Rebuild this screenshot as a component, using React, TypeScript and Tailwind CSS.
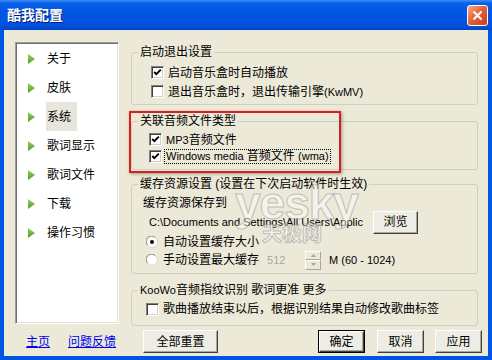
import React from "react";

const FONT = "font-['Liberation_Sans','Noto_Sans_CJK_SC',sans-serif]";

const menuItems = ["关于", "皮肤", "系统", "歌词显示", "歌词文件", "下载", "操作习惯"];

function CheckBox({ checked }: { checked?: boolean }) {
  return (
    <span className="relative inline-block h-[13px] w-[13px] shrink-0 border border-t-[#808080] border-l-[#808080] border-r-white border-b-white bg-white shadow-[inset_1px_1px_0_#404040,inset_-1px_-1px_0_#d4d0c8]">
      {checked && (
        <svg viewBox="0 0 11 11" className="absolute inset-0 h-[11px] w-[11px]">
          <path d="M2.2 5 L4.3 7.2 L8.8 2.6" fill="none" stroke="#000" strokeWidth="1.9" />
        </svg>
      )}
    </span>
  );
}

function Radio({ checked }: { checked?: boolean }) {
  return (
    <svg width="12" height="12" viewBox="0 0 12 12" className="shrink-0">
      <circle cx="6" cy="6" r="5.5" fill="#fff" stroke="#d8d6cc" />
      <path d="M1.6 9 A5 5 0 0 1 9 1.6" fill="none" stroke="#8e8c84" strokeWidth="1" />
      {checked && <circle cx="6" cy="6" r="2" fill="#000" />}
    </svg>
  );
}

function WinButton({ children, isDefault, className = "" }: { children: React.ReactNode; isDefault?: boolean; className?: string }) {
  return (
    <div className={`h-[23px] shrink-0 ${isDefault ? "border border-black" : ""} ${className}`}>
      <div className="flex h-full w-full items-center justify-center border border-t-white border-l-white border-r-[#404040] border-b-[#404040] bg-[#eeede5] text-[12px] shadow-[inset_-1px_-1px_0_#aca899]">
        {children}
      </div>
    </div>
  );
}

function GroupBox({ title, className = "", children }: { title: React.ReactNode; className?: string; children: React.ReactNode }) {
  return (
    <fieldset className={`w-[347px] rounded-[3px] border border-[#d0d0bf] ${className}`}>
      <legend className="ml-[6px] px-[2px] text-[12px] leading-[14px]">{title}</legend>
      {children}
    </fieldset>
  );
}

function Arrow({ up }: { up?: boolean }) {
  return (
    <svg width="5" height="3" viewBox="0 0 5 3">
      <path d={up ? "M0 3 L2.5 0 L5 3 Z" : "M0 0 L2.5 3 L5 0 Z"} fill="#aca899" />
    </svg>
  );
}

export default function App() {
  return (
    <div className={`flex h-[360px] w-[492px] flex-col bg-[#0054e3] text-black ${FONT}`}>
      {/* title bar */}
      <div className="flex h-[30px] shrink-0 items-start bg-[linear-gradient(to_bottom,#3d8ef6_0%,#0a61e9_10%,#0055e3_45%,#0052de_85%,#0045c2_100%)]">
        <span className="mt-[6px] pl-[7px] text-[14px] font-bold leading-[18px] text-white [text-shadow:1px_1px_0_#0a1e6e]">酷我配置</span>
        <div className="ml-auto mr-[4px] mt-[5px] flex h-[21px] w-[21px] items-center justify-center rounded-[3px] border border-white bg-[linear-gradient(135deg,#f4ab8c_0%,#e2643e_45%,#c43f1c_100%)]">
          <svg width="11" height="11" viewBox="0 0 11 11">
            <path d="M1.5 1.5 L9.5 9.5 M9.5 1.5 L1.5 9.5" stroke="#fff" strokeWidth="2" />
          </svg>
        </div>
      </div>

      {/* body */}
      <div className="relative mx-[4px] mb-[4px] flex-1 bg-[#ece9d8]">
        <div className="flex items-start pl-[11px] pt-[12px]">
          {/* left menu */}
          <div className="h-[282px] w-[104px] shrink-0 border border-t-[#9d9d9d] border-l-[#9d9d9d] border-r-white border-b-white bg-white p-px shadow-[inset_1px_1px_0_#6e6e6e,inset_-1px_-1px_0_#e4e2d8]">
            {menuItems.map((item, i) => (
              <div key={item} className="flex h-[29px] items-center">
                <svg width="7" height="10" viewBox="0 0 7 10" className="ml-[11px] shrink-0">
                  <defs>
                    <linearGradient id={`tri${i}`} x1="0" y1="0" x2="0" y2="1">
                      <stop offset="0" stopColor="#9ad068" />
                      <stop offset="1" stopColor="#4f9c22" />
                    </linearGradient>
                  </defs>
                  <path d="M0 0 L7 5 L0 10 Z" fill={`url(#tri${i})`} />
                </svg>
                <span className={`ml-[11px] flex h-full items-center pl-px pr-[6px] text-[12px] ${i === 2 ? "bg-[#e8e6dc]" : ""}`}>{item}</span>
              </div>
            ))}
          </div>

          {/* right groups */}
          <div className="ml-[12px] mt-[3px] flex flex-col">
            <GroupBox title="启动退出设置">
              <div className="pb-[3px] pl-[19px] pt-[4px] text-[12px]">
                <div className="flex h-[19px] items-center gap-[4px]">
                  <CheckBox checked />
                  <span>启动音乐盒时自动播放</span>
                </div>
                <div className="flex h-[19px] items-center gap-[4px]">
                  <CheckBox />
                  <span>
                    退出音乐盒时，退出传输引擎<span className="text-[11px]">(KwMV)</span>
                  </span>
                </div>
              </div>
            </GroupBox>

            <GroupBox title="关联音频文件类型" className="mt-[9px]">
              <div className="pb-[4px] pl-[17px] pt-[3px] text-[12px]">
                <div className="flex h-[17px] items-center gap-[2px]">
                  <CheckBox checked />
                  <span className="border border-transparent px-px">
                    <span className="text-[11px]">MP3</span>音频文件
                  </span>
                </div>
                <div className="flex h-[17px] items-center gap-[2px]">
                  <CheckBox checked />
                  <span className="border border-dotted border-black px-px leading-[13px]">
                    <span className="text-[11px]">Windows media </span>音频文件 <span className="text-[11px]">(wma)</span>
                  </span>
                </div>
              </div>
            </GroupBox>

            <GroupBox title="缓存资源设置 (设置在下次启动软件时生效)" className="mt-[7px]">
              <div className="pb-[3px] pl-[11px] pt-[4px] text-[12px]">
                <div className="flex h-[16px] items-center">缓存资源保存到</div>
                <div className="flex h-[22px] items-center">
                  <span className="ml-[6px] w-[212px] whitespace-nowrap text-[11px]">
                    {"C:\\Documents and Settings\\All Users\\Applic"}
                  </span>
                  <WinButton className="ml-[12px] w-[45px]">浏览</WinButton>
                </div>
                <div className="flex h-[17px] items-center">
                  <span className="ml-[3px] flex items-center gap-[5px]">
                    <Radio checked />
                    <span>自动设置缓存大小</span>
                  </span>
                </div>
                <div className="flex h-[20px] items-center">
                  <span className="ml-[3px] flex items-center gap-[5px]">
                    <Radio />
                    <span>手动设置最大缓存</span>
                  </span>
                  <span className="ml-[8px] w-[38px] text-[11px] text-[#a8a8a0]">512</span>
                  <div className="flex h-[19px] w-[16px] flex-col">
                    <div className="flex flex-1 items-center justify-center border border-t-white border-l-white border-r-[#aca899] border-b-[#aca899] bg-[#ece9d8]">
                      <Arrow up />
                    </div>
                    <div className="flex flex-1 items-center justify-center border border-t-white border-l-white border-r-[#aca899] border-b-[#aca899] bg-[#ece9d8]">
                      <Arrow />
                    </div>
                  </div>
                  <span className="ml-[8px] text-[11px]">M (60 - 1024)</span>
                </div>
              </div>
            </GroupBox>

            <GroupBox
              title={
                <>
                  <span className="text-[11px]">KooWo</span>音频指纹识别 歌词更准 更多
                </>
              }
              className="mt-[9px]"
            >
              <div className="pb-[7px] pl-[14px] pt-[3px] text-[12px]">
                <div className="flex h-[18px] items-center gap-[4px]">
                  <CheckBox />
                  <span>歌曲播放结束以后，根据识别结果自动修改歌曲标签</span>
                </div>
              </div>
            </GroupBox>
          </div>
        </div>

        {/* bottom row */}
        <div className="mt-[4px] flex h-[23px] items-center pl-[22px] pr-[6px] text-[12px]">
          <span className="text-[#0000ee] underline">主页</span>
          <span className="ml-[18px] text-[#0000ee] underline">问题反馈</span>
          <WinButton className="ml-[27px] w-[75px]">全部重置</WinButton>
          <WinButton isDefault className="ml-auto w-[47px]">确定</WinButton>
          <WinButton className="ml-[12px] w-[47px]">取消</WinButton>
          <WinButton className="ml-[11px] w-[47px]">应用</WinButton>
        </div>

        {/* red annotation frame */}
        <div className="pointer-events-none absolute left-[125px] top-[81px] h-[62px] w-[212px] border-2 border-[#d61f1f] shadow-[1px_1px_3px_rgba(0,0,0,0.35)]" />

        {/* watermark */}
        <span className="pointer-events-none absolute left-[231px] top-[150px] text-[46px] font-bold leading-none tracking-[-1px] text-[rgba(255,255,255,0.45)] [-webkit-text-stroke:1px_rgba(140,140,140,0.5)]">yesky</span>
        <span className="pointer-events-none absolute left-[258px] top-[194px] text-[20px] font-bold leading-none text-[rgba(255,255,255,0.45)] [-webkit-text-stroke:1px_rgba(140,140,140,0.5)]">天极网</span>
      </div>
    </div>
  );
}
